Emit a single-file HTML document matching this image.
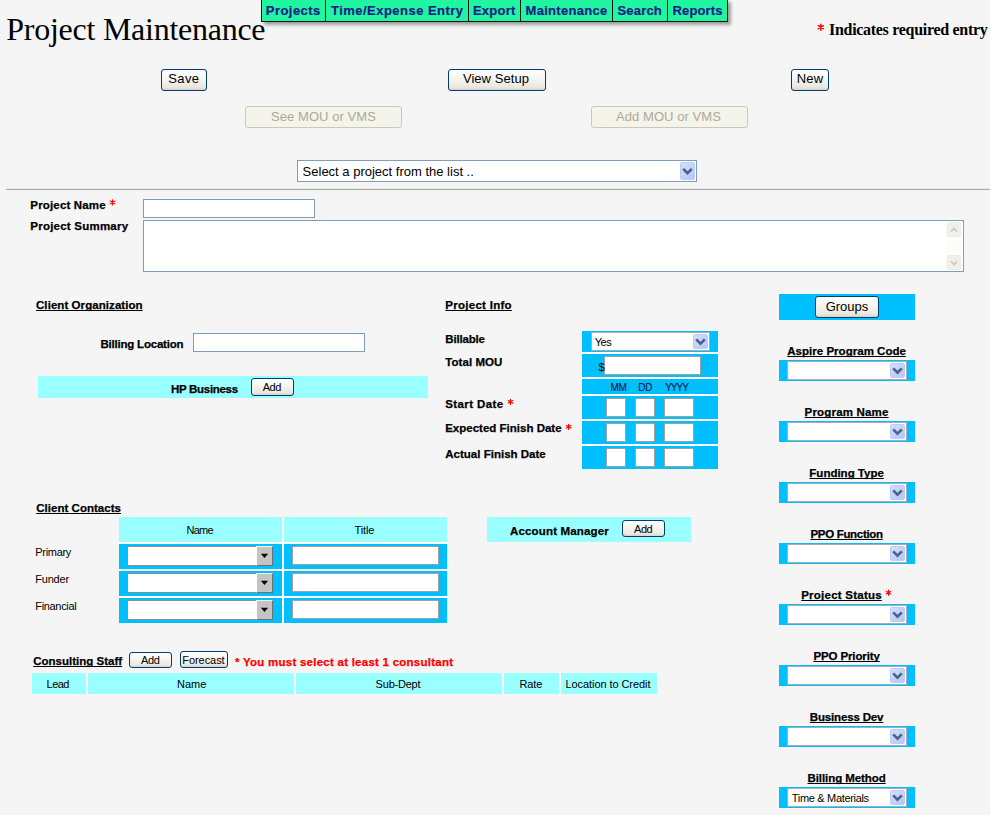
<!DOCTYPE html>
<html><head><meta charset="utf-8"><title>Project Maintenance</title>
<style>
html,body{margin:0;padding:0;width:990px;height:815px;overflow:hidden;background:#F5F5F5;}
body{position:relative;font-family:'Liberation Sans', sans-serif;}
</style></head><body>
<svg style="position:absolute;left:0;top:0;overflow:visible" width="1" height="1"><path d="M820.80 24.20 L820.80 30.20 M823.40 25.70 L818.20 28.70 M818.20 25.70 L823.40 28.70 " stroke="#FF0000" stroke-width="1.5" stroke-linecap="round" fill="none"/></svg>
<div style="position:absolute;left:261px;top:-1px;width:467px;height:23px;box-sizing:border-box;border:1px solid #111;background:#20F6A0;box-shadow:3px 3px 3px rgba(0,0,0,0.35);"></div>
<div style="position:absolute;left:325px;top:0px;width:1px;height:22px;background:#111;"></div>
<div style="position:absolute;left:468px;top:0px;width:1px;height:22px;background:#111;"></div>
<div style="position:absolute;left:520px;top:0px;width:1px;height:22px;background:#111;"></div>
<div style="position:absolute;left:612px;top:0px;width:1px;height:22px;background:#111;"></div>
<div style="position:absolute;left:667px;top:0px;width:1px;height:22px;background:#111;"></div>
<div style="position:absolute;left:161px;top:69px;width:46px;height:22px;box-sizing:border-box;border:1px solid #003C74;border-radius:3px;background:linear-gradient(#FFFFFF 0%,#F6F6F3 40%,#EAE8E0 85%,#D8D2C6 100%);"></div>
<div style="position:absolute;left:448px;top:69px;width:98px;height:22px;box-sizing:border-box;border:1px solid #003C74;border-radius:3px;background:linear-gradient(#FFFFFF 0%,#F6F6F3 40%,#EAE8E0 85%,#D8D2C6 100%);"></div>
<div style="position:absolute;left:791px;top:69px;width:38px;height:22px;box-sizing:border-box;border:1px solid #003C74;border-radius:3px;background:linear-gradient(#FFFFFF 0%,#F6F6F3 40%,#EAE8E0 85%,#D8D2C6 100%);"></div>
<div style="position:absolute;left:245px;top:106px;width:157px;height:22px;box-sizing:border-box;border:1px solid #CAC8BB;border-radius:3px;background:#F5F4EA;"></div>
<div style="position:absolute;left:591px;top:106px;width:157px;height:22px;box-sizing:border-box;border:1px solid #CAC8BB;border-radius:3px;background:#F5F4EA;"></div>
<div style="position:absolute;left:297px;top:160px;width:400px;height:22px;box-sizing:border-box;border:1px solid #7F9DB9;background:#FFFFFF;"></div>
<div style="position:absolute;left:680px;top:162px;width:15px;height:18px;box-sizing:border-box;border:1px solid #BCCDF5;border-radius:2px;background:linear-gradient(135deg,#D2DFFF 0%,#C2D3FB 50%,#B3C7F6 100%);"></div>
<svg style="position:absolute;left:0;top:0;overflow:visible" width="1" height="1"><path d="M683.20 168.80 L687.50 173.10 L691.80 168.80" fill="none" stroke="#4D6185" stroke-width="2.6"/></svg>
<div style="position:absolute;left:6px;top:188px;width:984px;height:1px;background:#E8E8EE;"></div>
<div style="position:absolute;left:6px;top:189px;width:984px;height:1px;background:#ABAA92;"></div>
<svg style="position:absolute;left:0;top:0;overflow:visible" width="1" height="1"><path d="M112.50 199.80 L112.50 205.00 M114.75 201.10 L110.25 203.70 M110.25 201.10 L114.75 203.70 " stroke="#FF0000" stroke-width="1.15" stroke-linecap="round" fill="none"/></svg>
<div style="position:absolute;left:143px;top:199px;width:172px;height:19px;box-sizing:border-box;border:1px solid #7F9DB9;background:#FFFFFF;"></div>
<div style="position:absolute;left:143px;top:220px;width:821px;height:52px;box-sizing:border-box;border:1px solid #7F9DB9;background:#FFFFFF;"></div>
<div style="position:absolute;left:946px;top:222px;width:16px;height:48px;background:#FCFCFA;"></div>
<div style="position:absolute;left:947px;top:222px;width:14px;height:15px;box-sizing:border-box;border:1px solid #EEEDE5;border-radius:2px;background:#F0EFE8;"></div>
<div style="position:absolute;left:947px;top:255px;width:14px;height:15px;box-sizing:border-box;border:1px solid #EEEDE5;border-radius:2px;background:#F0EFE8;"></div>
<svg style="position:absolute;left:950px;top:226px" width="8" height="8" viewBox="0 0 8 8"><path d="M1 5.5 L4 2.5 L7 5.5" fill="none" stroke="#C8C6BC" stroke-width="1.6"/></svg>
<svg style="position:absolute;left:950px;top:259px" width="8" height="8" viewBox="0 0 8 8"><path d="M1 2.5 L4 5.5 L7 2.5" fill="none" stroke="#C8C6BC" stroke-width="1.6"/></svg>
<div style="position:absolute;left:193px;top:333px;width:172px;height:19px;box-sizing:border-box;border:1px solid #7F9DB9;background:#FFFFFF;"></div>
<div style="position:absolute;left:38px;top:376px;width:390px;height:22px;background:#99FFFF;"></div>
<div style="position:absolute;left:251px;top:378px;width:43px;height:18px;box-sizing:border-box;border:1px solid #003C74;border-radius:3px;background:linear-gradient(#FFFFFF 0%,#F6F6F3 40%,#EAE8E0 85%,#D8D2C6 100%);"></div>
<svg style="position:absolute;left:0;top:0;overflow:visible" width="1" height="1"><path d="M510.50 399.20 L510.50 404.40 M512.75 400.50 L508.25 403.10 M508.25 400.50 L512.75 403.10 " stroke="#FF0000" stroke-width="1.15" stroke-linecap="round" fill="none"/></svg>
<svg style="position:absolute;left:0;top:0;overflow:visible" width="1" height="1"><path d="M568.60 424.20 L568.60 429.40 M570.85 425.50 L566.35 428.10 M566.35 425.50 L570.85 428.10 " stroke="#FF0000" stroke-width="1.15" stroke-linecap="round" fill="none"/></svg>
<div style="position:absolute;left:582px;top:331px;width:136px;height:21px;background:#00BFFF;"></div>
<div style="position:absolute;left:582px;top:354px;width:136px;height:23px;background:#00BFFF;"></div>
<div style="position:absolute;left:582px;top:379px;width:136px;height:15px;background:#00BFFF;"></div>
<div style="position:absolute;left:582px;top:396px;width:136px;height:23px;background:#00BFFF;"></div>
<div style="position:absolute;left:582px;top:421px;width:136px;height:23px;background:#00BFFF;"></div>
<div style="position:absolute;left:582px;top:446px;width:136px;height:23px;background:#00BFFF;"></div>
<div style="position:absolute;left:582px;top:352px;width:136px;height:2px;background:#FFFFFF;"></div>
<div style="position:absolute;left:582px;top:377px;width:136px;height:2px;background:#FFFFFF;"></div>
<div style="position:absolute;left:582px;top:394px;width:136px;height:2px;background:#FFFFFF;"></div>
<div style="position:absolute;left:582px;top:419px;width:136px;height:2px;background:#FFFFFF;"></div>
<div style="position:absolute;left:582px;top:444px;width:136px;height:2px;background:#FFFFFF;"></div>
<div style="position:absolute;left:591px;top:332px;width:119px;height:19px;box-sizing:border-box;border:1px solid #A5ACB2;background:#FFFFFF;"></div>
<div style="position:absolute;left:693px;top:334px;width:15px;height:15px;box-sizing:border-box;border:1px solid #BCCDF5;border-radius:2px;background:linear-gradient(135deg,#D2DFFF 0%,#C2D3FB 50%,#B3C7F6 100%);"></div>
<svg style="position:absolute;left:0;top:0;overflow:visible" width="1" height="1"><path d="M696.20 339.30 L700.50 343.60 L704.80 339.30" fill="none" stroke="#4D6185" stroke-width="2.6"/></svg>
<div style="position:absolute;left:604px;top:356px;width:97px;height:19px;box-sizing:border-box;border:1px solid #A0A0A0;background:#FFFFFF;"></div>
<div style="position:absolute;left:606px;top:398px;width:20px;height:19px;box-sizing:border-box;border:1px solid #A0A0A0;background:#FFFFFF;"></div>
<div style="position:absolute;left:635px;top:398px;width:20px;height:19px;box-sizing:border-box;border:1px solid #A0A0A0;background:#FFFFFF;"></div>
<div style="position:absolute;left:664px;top:398px;width:30px;height:19px;box-sizing:border-box;border:1px solid #A0A0A0;background:#FFFFFF;"></div>
<div style="position:absolute;left:606px;top:423px;width:20px;height:19px;box-sizing:border-box;border:1px solid #A0A0A0;background:#FFFFFF;"></div>
<div style="position:absolute;left:635px;top:423px;width:20px;height:19px;box-sizing:border-box;border:1px solid #A0A0A0;background:#FFFFFF;"></div>
<div style="position:absolute;left:664px;top:423px;width:30px;height:19px;box-sizing:border-box;border:1px solid #A0A0A0;background:#FFFFFF;"></div>
<div style="position:absolute;left:606px;top:448px;width:20px;height:19px;box-sizing:border-box;border:1px solid #A0A0A0;background:#FFFFFF;"></div>
<div style="position:absolute;left:635px;top:448px;width:20px;height:19px;box-sizing:border-box;border:1px solid #A0A0A0;background:#FFFFFF;"></div>
<div style="position:absolute;left:664px;top:448px;width:30px;height:19px;box-sizing:border-box;border:1px solid #A0A0A0;background:#FFFFFF;"></div>
<div style="position:absolute;left:779px;top:294px;width:136px;height:26px;background:#00BFFF;"></div>
<div style="position:absolute;left:815px;top:296px;width:64px;height:22px;box-sizing:border-box;border:1px solid #003C74;border-radius:3px;background:linear-gradient(#FFFFFF 0%,#F6F6F3 40%,#EAE8E0 85%,#D8D2C6 100%);"></div>
<div style="position:absolute;left:779px;top:360px;width:136px;height:21px;background:#00BFFF;"></div>
<div style="position:absolute;left:787px;top:361px;width:120px;height:19px;box-sizing:border-box;border:1px solid #A5ACB2;background:#FFFFFF;"></div>
<div style="position:absolute;left:890px;top:363px;width:15px;height:15px;box-sizing:border-box;border:1px solid #BCCDF5;border-radius:2px;background:linear-gradient(135deg,#D2DFFF 0%,#C2D3FB 50%,#B3C7F6 100%);"></div>
<svg style="position:absolute;left:0;top:0;overflow:visible" width="1" height="1"><path d="M893.20 368.30 L897.50 372.60 L901.80 368.30" fill="none" stroke="#4D6185" stroke-width="2.6"/></svg>
<div style="position:absolute;left:779px;top:421px;width:136px;height:21px;background:#00BFFF;"></div>
<div style="position:absolute;left:787px;top:422px;width:120px;height:19px;box-sizing:border-box;border:1px solid #A5ACB2;background:#FFFFFF;"></div>
<div style="position:absolute;left:890px;top:424px;width:15px;height:15px;box-sizing:border-box;border:1px solid #BCCDF5;border-radius:2px;background:linear-gradient(135deg,#D2DFFF 0%,#C2D3FB 50%,#B3C7F6 100%);"></div>
<svg style="position:absolute;left:0;top:0;overflow:visible" width="1" height="1"><path d="M893.20 429.30 L897.50 433.60 L901.80 429.30" fill="none" stroke="#4D6185" stroke-width="2.6"/></svg>
<div style="position:absolute;left:779px;top:482px;width:136px;height:21px;background:#00BFFF;"></div>
<div style="position:absolute;left:787px;top:483px;width:120px;height:19px;box-sizing:border-box;border:1px solid #A5ACB2;background:#FFFFFF;"></div>
<div style="position:absolute;left:890px;top:485px;width:15px;height:15px;box-sizing:border-box;border:1px solid #BCCDF5;border-radius:2px;background:linear-gradient(135deg,#D2DFFF 0%,#C2D3FB 50%,#B3C7F6 100%);"></div>
<svg style="position:absolute;left:0;top:0;overflow:visible" width="1" height="1"><path d="M893.20 490.30 L897.50 494.60 L901.80 490.30" fill="none" stroke="#4D6185" stroke-width="2.6"/></svg>
<div style="position:absolute;left:779px;top:543px;width:136px;height:21px;background:#00BFFF;"></div>
<div style="position:absolute;left:787px;top:544px;width:120px;height:19px;box-sizing:border-box;border:1px solid #A5ACB2;background:#FFFFFF;"></div>
<div style="position:absolute;left:890px;top:546px;width:15px;height:15px;box-sizing:border-box;border:1px solid #BCCDF5;border-radius:2px;background:linear-gradient(135deg,#D2DFFF 0%,#C2D3FB 50%,#B3C7F6 100%);"></div>
<svg style="position:absolute;left:0;top:0;overflow:visible" width="1" height="1"><path d="M893.20 551.30 L897.50 555.60 L901.80 551.30" fill="none" stroke="#4D6185" stroke-width="2.6"/></svg>
<svg style="position:absolute;left:0;top:0;overflow:visible" width="1" height="1"><path d="M888.50 590.10 L888.50 595.30 M890.75 591.40 L886.25 594.00 M886.25 591.40 L890.75 594.00 " stroke="#FF0000" stroke-width="1.15" stroke-linecap="round" fill="none"/></svg>
<div style="position:absolute;left:779px;top:604px;width:136px;height:21px;background:#00BFFF;"></div>
<div style="position:absolute;left:787px;top:605px;width:120px;height:19px;box-sizing:border-box;border:1px solid #A5ACB2;background:#FFFFFF;"></div>
<div style="position:absolute;left:890px;top:607px;width:15px;height:15px;box-sizing:border-box;border:1px solid #BCCDF5;border-radius:2px;background:linear-gradient(135deg,#D2DFFF 0%,#C2D3FB 50%,#B3C7F6 100%);"></div>
<svg style="position:absolute;left:0;top:0;overflow:visible" width="1" height="1"><path d="M893.20 612.30 L897.50 616.60 L901.80 612.30" fill="none" stroke="#4D6185" stroke-width="2.6"/></svg>
<div style="position:absolute;left:779px;top:665px;width:136px;height:21px;background:#00BFFF;"></div>
<div style="position:absolute;left:787px;top:666px;width:120px;height:19px;box-sizing:border-box;border:1px solid #A5ACB2;background:#FFFFFF;"></div>
<div style="position:absolute;left:890px;top:668px;width:15px;height:15px;box-sizing:border-box;border:1px solid #BCCDF5;border-radius:2px;background:linear-gradient(135deg,#D2DFFF 0%,#C2D3FB 50%,#B3C7F6 100%);"></div>
<svg style="position:absolute;left:0;top:0;overflow:visible" width="1" height="1"><path d="M893.20 673.30 L897.50 677.60 L901.80 673.30" fill="none" stroke="#4D6185" stroke-width="2.6"/></svg>
<div style="position:absolute;left:779px;top:726px;width:136px;height:21px;background:#00BFFF;"></div>
<div style="position:absolute;left:787px;top:727px;width:120px;height:19px;box-sizing:border-box;border:1px solid #A5ACB2;background:#FFFFFF;"></div>
<div style="position:absolute;left:890px;top:729px;width:15px;height:15px;box-sizing:border-box;border:1px solid #BCCDF5;border-radius:2px;background:linear-gradient(135deg,#D2DFFF 0%,#C2D3FB 50%,#B3C7F6 100%);"></div>
<svg style="position:absolute;left:0;top:0;overflow:visible" width="1" height="1"><path d="M893.20 734.30 L897.50 738.60 L901.80 734.30" fill="none" stroke="#4D6185" stroke-width="2.6"/></svg>
<div style="position:absolute;left:779px;top:787px;width:136px;height:21px;background:#00BFFF;"></div>
<div style="position:absolute;left:787px;top:788px;width:120px;height:19px;box-sizing:border-box;border:1px solid #A5ACB2;background:#FFFFFF;"></div>
<div style="position:absolute;left:890px;top:790px;width:15px;height:15px;box-sizing:border-box;border:1px solid #BCCDF5;border-radius:2px;background:linear-gradient(135deg,#D2DFFF 0%,#C2D3FB 50%,#B3C7F6 100%);"></div>
<svg style="position:absolute;left:0;top:0;overflow:visible" width="1" height="1"><path d="M893.20 795.30 L897.50 799.60 L901.80 795.30" fill="none" stroke="#4D6185" stroke-width="2.6"/></svg>
<div style="position:absolute;left:119px;top:517px;width:328px;height:106px;background:#FFFFFF;"></div>
<div style="position:absolute;left:119px;top:517px;width:163px;height:25px;background:#99FFFF;"></div>
<div style="position:absolute;left:284px;top:517px;width:163px;height:25px;background:#99FFFF;"></div>
<div style="position:absolute;left:119px;top:544px;width:163px;height:25px;background:#00BFFF;"></div>
<div style="position:absolute;left:284px;top:544px;width:163px;height:25px;background:#00BFFF;"></div>
<div style="position:absolute;left:127px;top:546px;width:146px;height:20px;box-sizing:border-box;border:1px solid #8C8C9C;background:#FFFFFF;"></div>
<div style="position:absolute;left:256px;top:546px;width:17px;height:20px;box-sizing:border-box;border-top:1px solid #F4F4F0;border-left:1px solid #FFFFFF;border-right:1px solid #707070;border-bottom:1px solid #707070;background:#C6C4C2;"></div>
<svg style="position:absolute;left:0;top:0;overflow:visible" width="1" height="1"><path d="M260.90 553.80 L268.10 553.80 L264.50 557.90 Z" fill="#000"/></svg>
<div style="position:absolute;left:292px;top:546px;width:147px;height:19px;box-sizing:border-box;border:1px solid #A0A0A0;background:#FFFFFF;"></div>
<div style="position:absolute;left:119px;top:571px;width:163px;height:25px;background:#00BFFF;"></div>
<div style="position:absolute;left:284px;top:571px;width:163px;height:25px;background:#00BFFF;"></div>
<div style="position:absolute;left:127px;top:573px;width:146px;height:20px;box-sizing:border-box;border:1px solid #8C8C9C;background:#FFFFFF;"></div>
<div style="position:absolute;left:256px;top:573px;width:17px;height:20px;box-sizing:border-box;border-top:1px solid #F4F4F0;border-left:1px solid #FFFFFF;border-right:1px solid #707070;border-bottom:1px solid #707070;background:#C6C4C2;"></div>
<svg style="position:absolute;left:0;top:0;overflow:visible" width="1" height="1"><path d="M260.90 580.80 L268.10 580.80 L264.50 584.90 Z" fill="#000"/></svg>
<div style="position:absolute;left:292px;top:573px;width:147px;height:19px;box-sizing:border-box;border:1px solid #A0A0A0;background:#FFFFFF;"></div>
<div style="position:absolute;left:119px;top:598px;width:163px;height:25px;background:#00BFFF;"></div>
<div style="position:absolute;left:284px;top:598px;width:163px;height:25px;background:#00BFFF;"></div>
<div style="position:absolute;left:127px;top:600px;width:146px;height:20px;box-sizing:border-box;border:1px solid #8C8C9C;background:#FFFFFF;"></div>
<div style="position:absolute;left:256px;top:600px;width:17px;height:20px;box-sizing:border-box;border-top:1px solid #F4F4F0;border-left:1px solid #FFFFFF;border-right:1px solid #707070;border-bottom:1px solid #707070;background:#C6C4C2;"></div>
<svg style="position:absolute;left:0;top:0;overflow:visible" width="1" height="1"><path d="M260.90 607.80 L268.10 607.80 L264.50 611.90 Z" fill="#000"/></svg>
<div style="position:absolute;left:292px;top:600px;width:147px;height:19px;box-sizing:border-box;border:1px solid #A0A0A0;background:#FFFFFF;"></div>
<div style="position:absolute;left:487px;top:517px;width:204px;height:25px;background:#99FFFF;"></div>
<div style="position:absolute;left:622px;top:520px;width:43px;height:17px;box-sizing:border-box;border:1px solid #003C74;border-radius:3px;background:linear-gradient(#FFFFFF 0%,#F6F6F3 40%,#EAE8E0 85%,#D8D2C6 100%);"></div>
<div style="position:absolute;left:129px;top:652px;width:43px;height:16px;box-sizing:border-box;border:1px solid #003C74;border-radius:3px;background:linear-gradient(#FFFFFF 0%,#F6F6F3 40%,#EAE8E0 85%,#D8D2C6 100%);"></div>
<div style="position:absolute;left:180px;top:651px;width:48px;height:17px;box-sizing:border-box;border:1px solid #003C74;border-radius:3px;background:linear-gradient(#FFFFFF 0%,#F6F6F3 40%,#EAE8E0 85%,#D8D2C6 100%);"></div>
<div style="position:absolute;left:32px;top:673px;width:625px;height:21px;background:#FFFFFF;"></div>
<div style="position:absolute;left:32px;top:673px;width:54px;height:21px;background:#99FFFF;"></div>
<div style="position:absolute;left:88px;top:673px;width:206px;height:21px;background:#99FFFF;"></div>
<div style="position:absolute;left:296px;top:673px;width:206px;height:21px;background:#99FFFF;"></div>
<div style="position:absolute;left:504px;top:673px;width:55px;height:21px;background:#99FFFF;"></div>
<div style="position:absolute;left:561px;top:673px;width:96px;height:21px;background:#99FFFF;"></div>
<div style="position:absolute;left:6.30px;top:13.00px;font:32px 'Liberation Serif', serif;line-height:32px;white-space:pre;color:#000;letter-spacing:-0.257px;">Project Maintenance</div>
<div style="position:absolute;left:829.00px;top:21.70px;font:bold 16px 'Liberation Serif', serif;line-height:16px;white-space:pre;color:#000;letter-spacing:-0.297px;">Indicates required entry</div>
<div style="position:absolute;left:265.80px;top:4.00px;font:bold 13px 'Liberation Sans', sans-serif;line-height:13px;white-space:pre;color:#1A1A8A;letter-spacing:0.461px;-webkit-text-stroke:0.2px currentColor;">Projects</div>
<div style="position:absolute;left:331.00px;top:4.00px;font:bold 13px 'Liberation Sans', sans-serif;line-height:13px;white-space:pre;color:#1A1A8A;letter-spacing:0.470px;-webkit-text-stroke:0.2px currentColor;">Time/Expense Entry</div>
<div style="position:absolute;left:472.90px;top:4.00px;font:bold 13px 'Liberation Sans', sans-serif;line-height:13px;white-space:pre;color:#1A1A8A;letter-spacing:0.271px;-webkit-text-stroke:0.2px currentColor;">Export</div>
<div style="position:absolute;left:525.60px;top:4.00px;font:bold 13px 'Liberation Sans', sans-serif;line-height:13px;white-space:pre;color:#1A1A8A;letter-spacing:0.286px;-webkit-text-stroke:0.2px currentColor;">Maintenance</div>
<div style="position:absolute;left:617.40px;top:4.00px;font:bold 13px 'Liberation Sans', sans-serif;line-height:13px;white-space:pre;color:#1A1A8A;letter-spacing:0.204px;-webkit-text-stroke:0.2px currentColor;">Search</div>
<div style="position:absolute;left:672.50px;top:4.00px;font:bold 13px 'Liberation Sans', sans-serif;line-height:13px;white-space:pre;color:#1A1A8A;letter-spacing:0.139px;-webkit-text-stroke:0.2px currentColor;">Reports</div>
<div style="position:absolute;left:168.20px;top:72.20px;font:13px 'Liberation Sans', sans-serif;line-height:13px;white-space:pre;color:#000;letter-spacing:0.415px;">Save</div>
<div style="position:absolute;left:462.90px;top:72.20px;font:13px 'Liberation Sans', sans-serif;line-height:13px;white-space:pre;color:#000;letter-spacing:0.057px;">View Setup</div>
<div style="position:absolute;left:796.70px;top:72.20px;font:13px 'Liberation Sans', sans-serif;line-height:13px;white-space:pre;color:#000;letter-spacing:0.261px;">New</div>
<div style="position:absolute;left:271.00px;top:109.60px;font:13px 'Liberation Sans', sans-serif;line-height:13px;white-space:pre;color:#ACA899;letter-spacing:0.069px;">See MOU or VMS</div>
<div style="position:absolute;left:616.00px;top:109.60px;font:13px 'Liberation Sans', sans-serif;line-height:13px;white-space:pre;color:#ACA899;letter-spacing:0.069px;">Add MOU or VMS</div>
<div style="position:absolute;left:302.60px;top:165.00px;font:13px 'Liberation Sans', sans-serif;line-height:13px;white-space:pre;color:#000;letter-spacing:0.000px;">Select a project from the list ..</div>
<div style="position:absolute;left:30.30px;top:199.70px;font:bold 11.5px 'Liberation Sans', sans-serif;line-height:11.5px;white-space:pre;color:#000;letter-spacing:0.165px;-webkit-text-stroke:0.25px currentColor;">Project Name</div>
<div style="position:absolute;left:30.30px;top:221.00px;font:bold 11.5px 'Liberation Sans', sans-serif;line-height:11.5px;white-space:pre;color:#000;letter-spacing:0.226px;-webkit-text-stroke:0.25px currentColor;">Project Summary</div>
<div style="position:absolute;left:36.00px;top:300.00px;font:bold 11.5px 'Liberation Sans', sans-serif;line-height:11.5px;white-space:pre;color:#000;letter-spacing:0.067px;-webkit-text-stroke:0.25px currentColor;text-decoration:underline;text-decoration-skip-ink:none;">Client Organization</div>
<div style="position:absolute;left:100.50px;top:339.00px;font:bold 11.5px 'Liberation Sans', sans-serif;line-height:11.5px;white-space:pre;color:#000;letter-spacing:-0.216px;-webkit-text-stroke:0.25px currentColor;">Billing Location</div>
<div style="position:absolute;left:171.00px;top:383.90px;font:bold 11.5px 'Liberation Sans', sans-serif;line-height:11.5px;white-space:pre;color:#000;letter-spacing:-0.301px;-webkit-text-stroke:0.25px currentColor;">HP Business</div>
<div style="position:absolute;left:262.70px;top:382.10px;font:11px 'Liberation Sans', sans-serif;line-height:11px;white-space:pre;color:#000;letter-spacing:-0.426px;">Add</div>
<div style="position:absolute;left:445.30px;top:300.20px;font:bold 11.5px 'Liberation Sans', sans-serif;line-height:11.5px;white-space:pre;color:#000;letter-spacing:0.278px;-webkit-text-stroke:0.25px currentColor;text-decoration:underline;text-decoration-skip-ink:none;">Project Info</div>
<div style="position:absolute;left:445.30px;top:334.00px;font:bold 11.5px 'Liberation Sans', sans-serif;line-height:11.5px;white-space:pre;color:#000;letter-spacing:-0.188px;-webkit-text-stroke:0.25px currentColor;">Billable</div>
<div style="position:absolute;left:445.30px;top:357.10px;font:bold 11.5px 'Liberation Sans', sans-serif;line-height:11.5px;white-space:pre;color:#000;letter-spacing:0.060px;-webkit-text-stroke:0.25px currentColor;">Total MOU</div>
<div style="position:absolute;left:445.20px;top:398.70px;font:bold 11.5px 'Liberation Sans', sans-serif;line-height:11.5px;white-space:pre;color:#000;letter-spacing:0.407px;-webkit-text-stroke:0.25px currentColor;">Start Date</div>
<div style="position:absolute;left:445.20px;top:423.40px;font:bold 11.5px 'Liberation Sans', sans-serif;line-height:11.5px;white-space:pre;color:#000;letter-spacing:0.004px;-webkit-text-stroke:0.25px currentColor;">Expected Finish Date</div>
<div style="position:absolute;left:445.20px;top:448.60px;font:bold 11.5px 'Liberation Sans', sans-serif;line-height:11.5px;white-space:pre;color:#000;letter-spacing:0.015px;-webkit-text-stroke:0.25px currentColor;">Actual Finish Date</div>
<div style="position:absolute;left:594.70px;top:336.50px;font:11px 'Liberation Sans', sans-serif;line-height:11px;white-space:pre;color:#000;letter-spacing:-0.418px;">Yes</div>
<div style="position:absolute;left:598.50px;top:361.50px;font:11px 'Liberation Sans', sans-serif;line-height:11px;white-space:pre;color:#000;letter-spacing:0.000px;">$</div>
<div style="position:absolute;left:610.60px;top:382.90px;font:10px 'Liberation Sans', sans-serif;line-height:10px;white-space:pre;color:#00204A;letter-spacing:-0.536px;-webkit-text-stroke:0.15px currentColor;">MM</div>
<div style="position:absolute;left:638.30px;top:382.90px;font:10px 'Liberation Sans', sans-serif;line-height:10px;white-space:pre;color:#00204A;letter-spacing:-0.227px;-webkit-text-stroke:0.15px currentColor;">DD</div>
<div style="position:absolute;left:665.20px;top:382.90px;font:10px 'Liberation Sans', sans-serif;line-height:10px;white-space:pre;color:#00204A;letter-spacing:-0.997px;-webkit-text-stroke:0.15px currentColor;">YYYY</div>
<div style="position:absolute;left:825.70px;top:299.90px;font:13px 'Liberation Sans', sans-serif;line-height:13px;white-space:pre;color:#000;letter-spacing:-0.023px;">Groups</div>
<div style="position:absolute;left:787.25px;top:345.80px;font:bold 11.5px 'Liberation Sans', sans-serif;line-height:11.5px;white-space:pre;color:#000;letter-spacing:0.025px;-webkit-text-stroke:0.25px currentColor;text-decoration:underline;text-decoration-skip-ink:none;">Aspire Program Code</div>
<div style="position:absolute;left:804.60px;top:406.80px;font:bold 11.5px 'Liberation Sans', sans-serif;line-height:11.5px;white-space:pre;color:#000;letter-spacing:0.182px;-webkit-text-stroke:0.25px currentColor;text-decoration:underline;text-decoration-skip-ink:none;">Program Name</div>
<div style="position:absolute;left:809.35px;top:467.80px;font:bold 11.5px 'Liberation Sans', sans-serif;line-height:11.5px;white-space:pre;color:#000;letter-spacing:-0.003px;-webkit-text-stroke:0.25px currentColor;text-decoration:underline;text-decoration-skip-ink:none;">Funding Type</div>
<div style="position:absolute;left:810.45px;top:528.80px;font:bold 11.5px 'Liberation Sans', sans-serif;line-height:11.5px;white-space:pre;color:#000;letter-spacing:-0.311px;-webkit-text-stroke:0.25px currentColor;text-decoration:underline;text-decoration-skip-ink:none;">PPO Function</div>
<div style="position:absolute;left:801.20px;top:589.80px;font:bold 11.5px 'Liberation Sans', sans-serif;line-height:11.5px;white-space:pre;color:#000;letter-spacing:0.241px;-webkit-text-stroke:0.25px currentColor;text-decoration:underline;text-decoration-skip-ink:none;">Project Status</div>
<div style="position:absolute;left:813.40px;top:650.80px;font:bold 11.5px 'Liberation Sans', sans-serif;line-height:11.5px;white-space:pre;color:#000;letter-spacing:-0.112px;-webkit-text-stroke:0.25px currentColor;text-decoration:underline;text-decoration-skip-ink:none;">PPO Priority</div>
<div style="position:absolute;left:809.85px;top:711.80px;font:bold 11.5px 'Liberation Sans', sans-serif;line-height:11.5px;white-space:pre;color:#000;letter-spacing:-0.161px;-webkit-text-stroke:0.25px currentColor;text-decoration:underline;text-decoration-skip-ink:none;">Business Dev</div>
<div style="position:absolute;left:807.50px;top:772.80px;font:bold 11.5px 'Liberation Sans', sans-serif;line-height:11.5px;white-space:pre;color:#000;letter-spacing:-0.073px;-webkit-text-stroke:0.25px currentColor;text-decoration:underline;text-decoration-skip-ink:none;">Billing Method</div>
<div style="position:absolute;left:791.80px;top:792.80px;font:11px 'Liberation Sans', sans-serif;line-height:11px;white-space:pre;color:#000;letter-spacing:-0.319px;">Time &amp; Materials</div>
<div style="position:absolute;left:36.30px;top:502.70px;font:bold 11.5px 'Liberation Sans', sans-serif;line-height:11.5px;white-space:pre;color:#000;letter-spacing:0.017px;-webkit-text-stroke:0.25px currentColor;text-decoration:underline;text-decoration-skip-ink:none;">Client Contacts</div>
<div style="position:absolute;left:186.50px;top:524.70px;font:11px 'Liberation Sans', sans-serif;line-height:11px;white-space:pre;color:#000;letter-spacing:-0.761px;">Name</div>
<div style="position:absolute;left:354.40px;top:525.00px;font:11px 'Liberation Sans', sans-serif;line-height:11px;white-space:pre;color:#000;letter-spacing:-0.075px;">Title</div>
<div style="position:absolute;left:35.30px;top:547.00px;font:11px 'Liberation Sans', sans-serif;line-height:11px;white-space:pre;color:#000;letter-spacing:-0.313px;">Primary</div>
<div style="position:absolute;left:35.30px;top:573.80px;font:11px 'Liberation Sans', sans-serif;line-height:11px;white-space:pre;color:#000;letter-spacing:-0.210px;">Funder</div>
<div style="position:absolute;left:35.30px;top:600.60px;font:11px 'Liberation Sans', sans-serif;line-height:11px;white-space:pre;color:#000;letter-spacing:-0.337px;">Financial</div>
<div style="position:absolute;left:510.00px;top:525.80px;font:bold 11.5px 'Liberation Sans', sans-serif;line-height:11.5px;white-space:pre;color:#000;letter-spacing:0.160px;-webkit-text-stroke:0.25px currentColor;">Account Manager</div>
<div style="position:absolute;left:634.00px;top:524.00px;font:11px 'Liberation Sans', sans-serif;line-height:11px;white-space:pre;color:#000;letter-spacing:-0.426px;">Add</div>
<div style="position:absolute;left:33.20px;top:656.40px;font:bold 11.5px 'Liberation Sans', sans-serif;line-height:11.5px;white-space:pre;color:#000;letter-spacing:0.006px;-webkit-text-stroke:0.25px currentColor;text-decoration:underline;text-decoration-skip-ink:none;">Consulting Staff</div>
<div style="position:absolute;left:141.00px;top:655.30px;font:11px 'Liberation Sans', sans-serif;line-height:11px;white-space:pre;color:#000;letter-spacing:-0.393px;">Add</div>
<div style="position:absolute;left:182.30px;top:655.30px;font:11px 'Liberation Sans', sans-serif;line-height:11px;white-space:pre;color:#000;letter-spacing:-0.062px;">Forecast</div>
<div style="position:absolute;left:235.00px;top:657.20px;font:bold 11.5px 'Liberation Sans', sans-serif;line-height:11.5px;white-space:pre;color:#FF0000;letter-spacing:0.250px;-webkit-text-stroke:0.25px currentColor;">* You must select at least 1 consultant</div>
<div style="position:absolute;left:46.60px;top:678.90px;font:11px 'Liberation Sans', sans-serif;line-height:11px;white-space:pre;color:#000;letter-spacing:-0.571px;">Lead</div>
<div style="position:absolute;left:177.00px;top:678.90px;font:11px 'Liberation Sans', sans-serif;line-height:11px;white-space:pre;color:#000;letter-spacing:0.000px;">Name</div>
<div style="position:absolute;left:375.60px;top:678.90px;font:11px 'Liberation Sans', sans-serif;line-height:11px;white-space:pre;color:#000;letter-spacing:-0.211px;">Sub-Dept</div>
<div style="position:absolute;left:519.50px;top:678.90px;font:11px 'Liberation Sans', sans-serif;line-height:11px;white-space:pre;color:#000;letter-spacing:-0.138px;">Rate</div>
<div style="position:absolute;left:565.50px;top:678.90px;font:11px 'Liberation Sans', sans-serif;line-height:11px;white-space:pre;color:#000;letter-spacing:-0.073px;">Location to Credit</div>
</body></html>
